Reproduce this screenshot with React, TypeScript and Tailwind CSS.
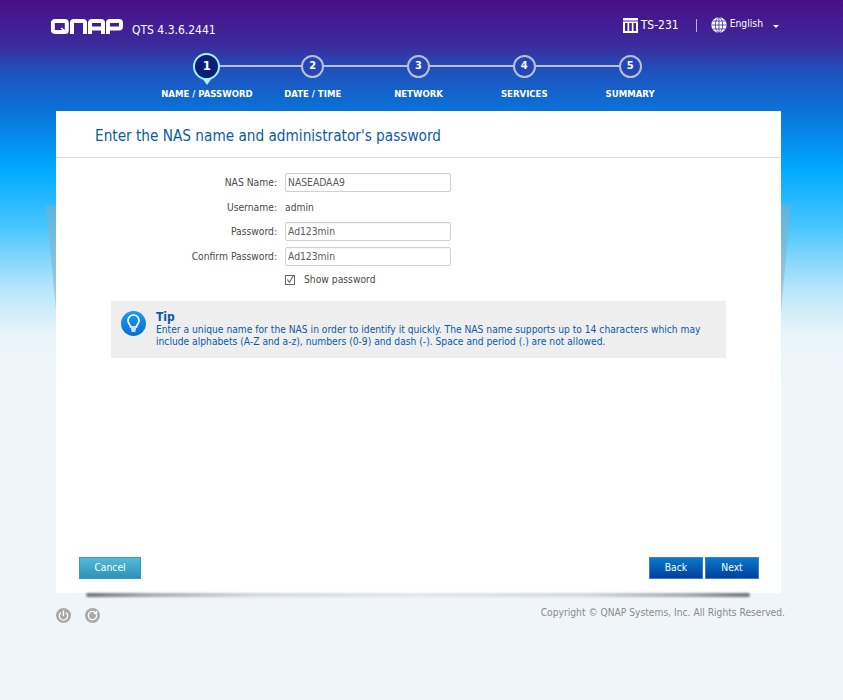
import { Power, RotateCw } from 'lucide-react';

const STEPS = [
  { n: 1, label: 'NAME / PASSWORD' },
  { n: 2, label: 'DATE / TIME' },
  { n: 3, label: 'NETWORK' },
  { n: 4, label: 'SERVICES' },
  { n: 5, label: 'SUMMARY' },
];

const FIELDS = [
  { label: 'NAS Name:', value: 'NASEADAA9' },
  { label: 'Username:', text: 'admin' },
  { label: 'Password:', value: 'Ad123min' },
  { label: 'Confirm Password:', value: 'Ad123min' },
];

function QnapLogo() {
  return (
    <svg width="72" height="15" viewBox="0 0 72 15" fill="none" stroke="#fff" strokeWidth="4">
      <path d="M3.800 2h10a2 2 0 0 1 2 2v7a2 2 0 0 1-2 2h-10a2 2 0 0 1-2-2v-7a2 2 0 0 1 2-2z" />
      <path d="M10 9l7 5" strokeWidth="1.500" />
      <path d="M21 15v-11a2 2 0 0 1 2-2h9a2 2 0 0 1 2 2v11" />
      <path d="M39 15v-11a2 2 0 0 1 2-2h9a2 2 0 0 1 2 2v11M39 9.500h13" />
      <path d="M57 15v-11a2 2 0 0 1 2-2h9a2 2 0 0 1 2 2v3.500a2 2 0 0 1-2 2h-11" />
    </svg>
  );
}

function ModelIcon() {
  return (
    <svg width="15" height="15" viewBox="0 0 15 15" fill="#fff">
      <rect x="0" y="0" width="15" height="2.500" />
      <path d="M0 3.500h15v11.500h-15zM2 5v8h2.500v-8zM6.200 5v8h2.600v-8zM10.500 5v8h2.500v-8z" fillRule="evenodd" />
    </svg>
  );
}

function GlobeIcon() {
  return (
    <svg width="16" height="16" viewBox="0 0 16 16" fill="#fff" stroke="#3a2a9e" strokeWidth="0.800">
      <circle cx="8" cy="8" r="7.700" stroke="none" />
      <ellipse cx="8" cy="8" rx="3.600" ry="7.700" fill="none" />
      <path d="M8 0.300v15.400M0.500 8h15M1.600 4h12.800M1.600 12h12.800" fill="none" />
    </svg>
  );
}

function TipIcon() {
  return (
    <svg width="25" height="25" viewBox="0 0 25 25" fill="none">
      <defs>
        <linearGradient id="tipFill" x1="0" y1="0" x2="0" y2="1">
          <stop offset="0" stopColor="#1a9bf0" />
          <stop offset="1" stopColor="#0a6fd0" />
        </linearGradient>
      </defs>
      <circle cx="12.500" cy="12.500" r="12.500" fill="url(#tipFill)" />
      <path
        d="M9.600 16c0-2-2.600-3.200-2.600-6.500a5.500 5.500 0 0 1 11 0c0 3.300-2.600 4.500-2.600 6.500z"
        stroke="#fff"
        strokeWidth="1.700"
      />
      <path d="M10 18h5M10.500 20h4" stroke="#fff" strokeWidth="1.300" />
    </svg>
  );
}

function Stepper() {
  return (
    <div className="relative ml-[154px] flex w-[529px] justify-between">
      <div className="absolute left-[53px] right-[53px] top-[13px] h-[2px] bg-[#b9c0d6]" />
      {STEPS.map((s) => (
        <div key={s.n} className="relative isolate flex w-[106px] flex-col items-center">
          <div className="flex h-[28px] items-center justify-center">
            {s.n === 1 ? (
              <div className="relative flex h-[27px] w-[27px] items-center justify-center rounded-full border-[2px] border-[#a5f1fb] bg-[#0b1f78] text-[13px] font-bold text-white">
                1
                <div className="absolute left-[3.500px] top-[19.500px] -z-10 h-0 w-0 border-x-[8px] border-t-[11px] border-x-transparent border-t-[#a5f1fb]" />
              </div>
            ) : (
              <div className="flex h-[23px] w-[23px] items-center justify-center rounded-full border-[2px] border-[#b9c0d6] bg-[#2546b8] text-[11px] font-bold text-white">
                {s.n}
              </div>
            )}
          </div>
          <div className="mt-[7px] text-[9.500px] font-bold whitespace-nowrap text-white">{s.label}</div>
        </div>
      ))}
    </div>
  );
}

function FormRows() {
  return (
    <div className="mt-[15px] flex flex-col gap-[6px]">
      {FIELDS.map((f) => (
        <div key={f.label} className={`flex h-[19px] items-center ${f.value ? '' : '-mb-px'}`}>
          <div className="w-[221px] text-right text-[10.250px] text-[#4a4a4a]">{f.label}</div>
          {f.value ? (
            <div className="ml-[8px] flex h-[19px] w-[166px] items-center rounded-[2px] border border-[#d0d0d0] px-[2px] text-[10.250px] text-[#5a5a5a] shadow-[inset_0_1px_1px_rgba(0,0,0,0.04)]">
              {f.value}
            </div>
          ) : (
            <div className="ml-[8px] text-[10.250px] text-[#4a4a4a]">{f.text}</div>
          )}
        </div>
      ))}
      <div className="mt-[1px] flex h-[13px] items-center pl-[229px]">
        <svg width="10" height="10" viewBox="0 0 10 10" fill="none" stroke="#666">
          <rect x="0.500" y="0.500" width="9" height="9" />
          <path d="M2.200 4.500l2.300 2.800 3.700-6.500" strokeWidth="1.100" />
        </svg>
        <span className="ml-[9px] text-[10.250px] text-[#4a4a4a]">Show password</span>
      </div>
    </div>
  );
}

export default function App() {
  return (
    <div className="relative flex min-h-[700px] flex-col overflow-hidden bg-[linear-gradient(#4a0f88_0px,#3c2a9c_45px,#2050bc_70px,#0a72d8_110px,#00aaff_170px,#45c5ff_225px,#b8e6fb_290px,#eaf5f9_335px,#f0f5f9_400px)] font-['DejaVu_Sans'] [font-stretch:condensed]">
      <div className="flex h-[49px] items-start px-[51px] pt-[19px] text-white">
        <QnapLogo />
        <span className="ml-[9px] mt-[2px] text-[12px]">QTS 4.3.6.2441</span>
        <div className="ml-auto mr-[13px] -mt-[3px] flex items-center">
          <ModelIcon />
          <span className="ml-[3px] text-[12px]">TS-231</span>
          <div className="ml-[17px] mr-[14px] h-[13px] w-[1px] bg-[#b9b4dc]" />
          <GlobeIcon />
          <span className="ml-[3px] -mt-[2px] text-[10.250px]">English</span>
          <div className="ml-[10px] mt-[2px] h-0 w-0 border-x-[3px] border-t-[3px] border-x-transparent border-t-white" />
        </div>
      </div>
      <div className="h-[62px] pt-[3px]">
        <Stepper />
      </div>

      <div className="relative mx-[56px] mr-[62px] flex h-[482px] flex-col bg-white">
        <div className="absolute -left-[10px] top-[94px] h-[105px] w-[10px] bg-[linear-gradient(#5ab4e0,#b0ccd8)] [clip-path:polygon(0_0,100%_0,100%_100%)]" />
        <div className="absolute -right-[10px] top-[94px] h-[105px] w-[10px] bg-[linear-gradient(#5ab4e0,#b0ccd8)] [clip-path:polygon(0_0,100%_0,0_100%)]" />
        <div className="flex h-[47px] items-center border-b border-[#dcdcdc] pl-[39px] pt-[5px] text-[15.200px] text-[#0b5aa5]">
          Enter the NAS name and administrator's password
        </div>
        <FormRows />
        <div className="ml-[55px] mt-[15px] flex h-[57px] w-[615px] bg-[#eeeeee] pl-[10px] pt-[10px]">
          <TipIcon />
          <div className="ml-[10px] text-[10.200px] leading-[12px] text-[#0b5aa5]">
            <div className="h-[13px] text-[12px] leading-[13px] font-bold">Tip</div>
            Enter a unique name for the NAS in order to identify it quickly. The NAS name supports up to 14 characters which may
            <br />
            include alphabets (A-Z and a-z), numbers (0-9) and dash (-). Space and period (.) are not allowed.
          </div>
        </div>
        <div className="mt-auto mb-[14px] flex items-center pl-[23px] pr-[22px] text-[10.250px] text-white">
          <button className="h-[22px] w-[62px] border border-[#3a9cbc] bg-[linear-gradient(#55b9d8,#2c93b7)]">Cancel</button>
          <button className="ml-auto h-[22px] w-[54px] border border-[#3f7fd0] bg-[linear-gradient(#0a78cc,#003f9e)]">Back</button>
          <button className="ml-[2px] h-[22px] w-[54px] border border-[#3f7fd0] bg-[linear-gradient(#0a78cc,#003f9e)]">Next</button>
        </div>
        <div className="absolute -bottom-[4px] left-[30px] right-[31px] h-[4px] rounded-full bg-[linear-gradient(90deg,#6e7274,#a8acae_10%,#d4d8da_25%,#e4e8ea_50%,#d4d8da_75%,#a8acae_90%,#6e7274)] blur-[1px]" />
      </div>

      <div className="flex items-start pl-[56px] pr-[58px] pt-[15px]">
        <div className="flex h-[15px] w-[15px] items-center justify-center rounded-full bg-[#a8a8a8]">
          <Power size={11} color="#fff" strokeWidth={3} />
        </div>
        <div className="ml-[14px] flex h-[15px] w-[15px] items-center justify-center rounded-full bg-[#a8a8a8]">
          <RotateCw size={11} color="#fff" strokeWidth={3} />
        </div>
        <div className="ml-auto -mt-[3px] text-[10.200px] text-[#8a8a8a]">Copyright © QNAP Systems, Inc. All Rights Reserved.</div>
      </div>
    </div>
  );
}
